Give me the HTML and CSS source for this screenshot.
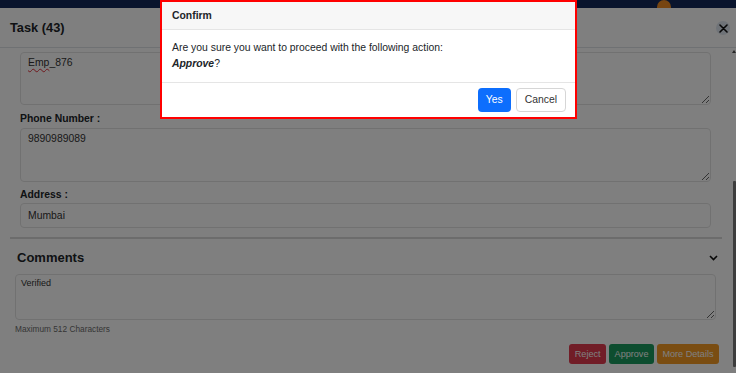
FILE: index.html
```html
<!DOCTYPE html>
<html lang="en">
<head>
<meta charset="utf-8">
<title>Task</title>
<link rel="stylesheet" href="styles.css">
</head>
<body>
<header class="topbar"><span class="avatar"></span></header>

<section class="task-modal">
  <div class="task-head">
    <h1 class="task-title">Task (43)</h1>
    <button class="close-btn" aria-label="Close">
      <svg width="9" height="9" viewBox="0 0 9 9"><path d="M1 1L8 8M8 1L1 8" stroke="#111" stroke-width="1.6" stroke-linecap="round"/></svg>
    </button>
  </div>
  <div class="task-body">
    <div class="task-scroll">
      <div class="fields">
        <div class="field-box tall"><span class="misspelt">Emp</span>_876</div>
        <div class="field-label">Phone Number :</div>
        <div class="field-box tall phone">9890989089</div>
        <div class="field-label addr">Address :</div>
        <div class="field-box single">Mumbai</div>
      </div>
      <div class="divider"></div>
      <div class="comments">
        <div class="comments-head">
          <h2 class="comments-title">Comments</h2>
          <svg class="chevron" width="9" height="6" viewBox="0 0 9 6"><path d="M1 1L4.5 4.5L8 1" fill="none" stroke="#111" stroke-width="1.6"/></svg>
        </div>
        <div class="field-box comment-box">Verified</div>
        <p class="hint">Maximum 512 Characters</p>
        <div class="actions">
          <button class="btn btn-reject">Reject</button>
          <button class="btn btn-approve">Approve</button>
          <button class="btn btn-more">More Details</button>
        </div>
      </div>
    </div>
    <div class="scrollbar"><span class="arrow-up"></span><span class="thumb"></span></div>
  </div>
</section>

<div class="backdrop"></div>

<div class="confirm" role="dialog">
  <div class="confirm-head">Confirm</div>
  <div class="confirm-body">
    Are you sure you want to proceed with the following action:<br>
    <b><i>Approve</i></b>?
  </div>
  <div class="confirm-foot">
    <button class="cbtn cbtn-yes">Yes</button>
    <button class="cbtn cbtn-cancel">Cancel</button>
  </div>
</div>
</body>
</html>
```
FILE: styles.css
```css
* { box-sizing: border-box; }
html, body { margin: 0; padding: 0; }
body {
  width: 736px;
  height: 373px;
  overflow: hidden;
  font-family: "Liberation Sans", Arial, sans-serif;
  color: #212529;
  background: #ffffff;
}

.topbar {
  height: 8px;
  background: #12295a;
  position: relative;
  overflow: hidden;
}
.avatar {
  position: absolute;
  left: 657px;
  top: 0;
  width: 14px;
  height: 14px;
  border-radius: 50%;
  background: #ee8a22;
}

.task-modal {
  background: #ffffff;
  border-radius: 6px 6px 0 0;
  height: 365px;
  display: flex;
  flex-direction: column;
}
.task-head {
  height: 40px;
  border-bottom: 1px solid #dee2e6;
  display: flex;
  align-items: center;
  justify-content: space-between;
  padding: 0 6px 0 10px;
}
.task-title {
  margin: 0;
  font-size: 12.8px;
  font-weight: bold;
  color: #212529;
}
.close-btn {
  width: 14px;
  height: 14px;
  border-radius: 50%;
  border: 0;
  padding: 0;
  background: #dfe6f0;
  display: flex;
  align-items: center;
  justify-content: center;
  margin-top: 1px;
}

.task-body {
  flex: 1;
  display: flex;
  min-height: 0;
}
.task-scroll {
  flex: 1;
  padding: 4px 7px 0 10px;
}
.scrollbar {
  width: 7px;
  display: flex;
  flex-direction: column;
  align-items: flex-end;
}
.arrow-up {
  margin-top: 2px;
  width: 0;
  height: 0;
  border-left: 2px solid transparent;
  border-right: 2px solid transparent;
  border-bottom: 3px solid #505050;
}
.thumb {
  margin-top: 128px;
  width: 3px;
  height: 186px;
  background: #7a7a7a;
  border-radius: 1px;
}

.fields {
  padding: 0 11px 0 10px;
}
.field-box {
  border: 1px solid #e2e2e2;
  border-radius: 4px;
  font-size: 10.4px;
  line-height: 14px;
  color: #333;
  padding: 3px 7px;
}
.field-box.tall {
  height: 53px;
  resize: vertical;
  overflow: hidden;
}
.field-box.phone { height: 54px; }
.field-box.single {
  height: 25px;
  padding-top: 5px;
}
.misspelt {
  text-decoration: underline wavy #e0303a;
  text-decoration-thickness: 1px;
  text-underline-offset: 2px;
}
.field-label {
  font-size: 10.4px;
  font-weight: bold;
  line-height: 14px;
  margin: 7px 0 2px;
  color: #212529;
}
.field-label.addr { margin: 6px 0 1px; }

.divider {
  height: 2px;
  background: #d9d9d9;
  margin-top: 9px;
}

.comments {
  padding: 0 3px 0 5px;
}
.comments-head {
  display: flex;
  align-items: center;
  justify-content: space-between;
  margin-top: 11px;
  padding: 0 1px 0 2px;
}
.comments-title {
  margin: 0;
  font-size: 13px;
  line-height: 16px;
  font-weight: bold;
  color: #212529;
}
.comment-box {
  margin: 8px 3px 0 0;
  height: 46px;
  font-size: 9px;
  line-height: 12px;
  padding: 2px 5px;
  resize: vertical;
  overflow: hidden;
}
.hint {
  margin: 4px 0 0;
  font-size: 8.3px;
  line-height: 10px;
  color: #6c6c6c;
}
.actions {
  display: flex;
  justify-content: flex-end;
  gap: 3px;
  margin-top: 10px;
}
.btn {
  height: 19.5px;
  padding: 0 5.5px;
  border: 0;
  border-radius: 3px;
  font-family: "Liberation Sans", Arial, sans-serif;
  font-size: 9.1px;
  color: #fff;
}
.btn-reject { background: #e23a4e; }
.btn-approve { background: #1a9a5e; }
.btn-more { background: #f49b25; }

.backdrop {
  position: fixed;
  inset: 0;
  background: rgba(0, 0, 0, 0.5);
}

.confirm {
  position: absolute;
  left: 160px;
  top: 0;
  width: 417px;
  border: 2px solid #ff0000;
  background: #fff;
  font-size: 10.4px;
  color: #212529;
}
.confirm-head {
  height: 28px;
  line-height: 27px;
  padding: 0 10px;
  background: #f7f7f7;
  border-bottom: 1px solid #e5e5e5;
  font-weight: bold;
}
.confirm-body {
  padding: 10px 10px 10.5px;
  line-height: 15.5px;
}
.confirm-foot {
  border-top: 1px solid #e5e5e5;
  display: flex;
  justify-content: flex-end;
  gap: 5px;
  padding: 5.5px 9px 5px;
}
.cbtn {
  height: 23.5px;
  padding: 0 8px;
  border-radius: 4px;
  font-family: "Liberation Sans", Arial, sans-serif;
  font-size: 10.4px;
}
.cbtn-yes {
  background: #0d6efd;
  border: 0;
  color: #fff;
}
.cbtn-cancel {
  background: #fff;
  border: 1px solid #d6d6d6;
  color: #333;
}
```
